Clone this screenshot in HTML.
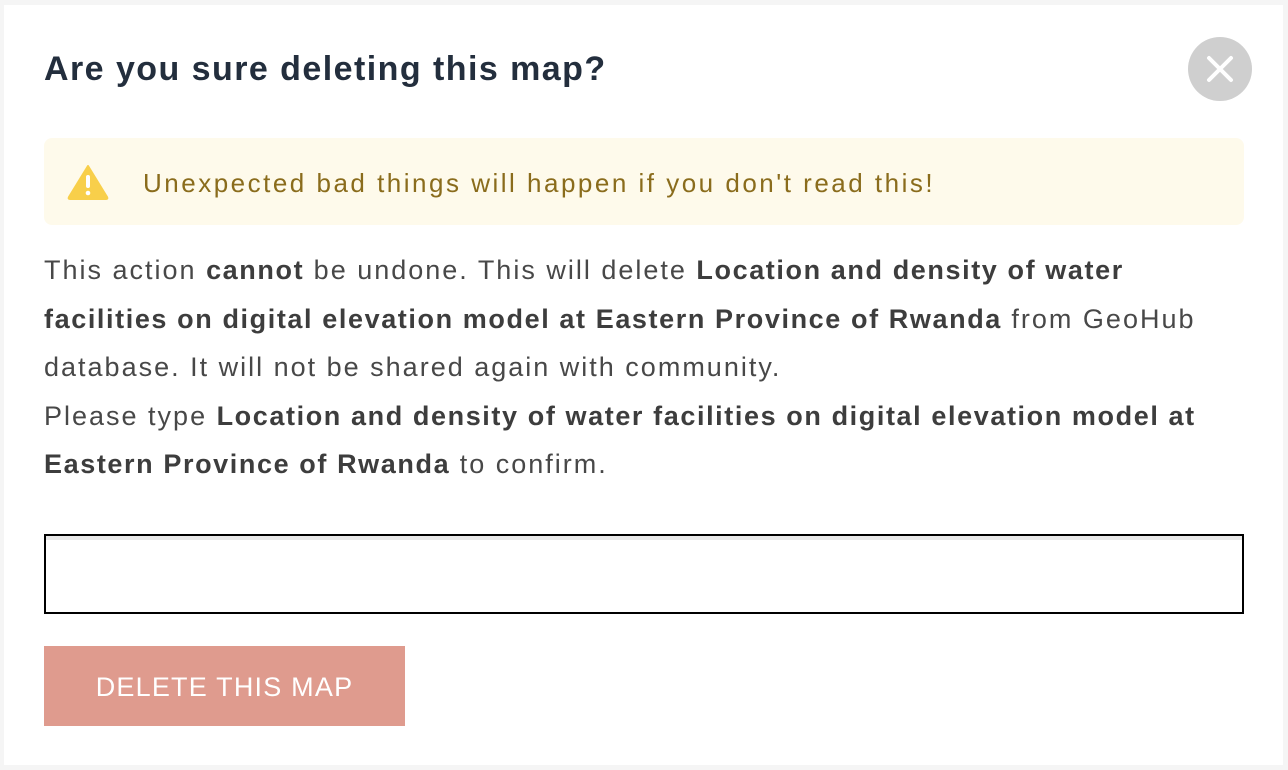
<!DOCTYPE html>
<html><head><meta charset="utf-8"><style>
html,body{margin:0;padding:0;width:1288px;height:770px;background:#f5f5f5;overflow:hidden;font-family:"Liberation Sans",sans-serif;}
.modal{position:absolute;left:4px;top:5px;width:1279px;height:760px;background:#fff;}
h1{position:absolute;left:40px;top:44px;margin:0;font-size:34px;font-weight:600;color:#232e3d;line-height:40px;letter-spacing:1.45px;white-space:nowrap}
.close{position:absolute;left:1184px;top:32px;width:64px;height:64px;border-radius:50%;background:#cfcfcf;}
.warn{position:absolute;left:40px;top:133px;width:1200px;height:87px;background:#fefaeb;border-radius:8px;}
.warn span{position:absolute;left:99px;top:30px;font-size:26px;color:#8a6c1c;line-height:30px;white-space:nowrap;letter-spacing:2.5px}
.body{position:absolute;left:40px;top:241px;font-size:27px;line-height:48.5px;color:#484848;white-space:nowrap;letter-spacing:2px}
.body b{color:#3d3d3d;letter-spacing:1.6px}
.input{position:absolute;left:40px;top:529px;width:1196px;height:76px;border:2px solid #000;}
.input:before{content:"";position:absolute;left:0;right:0;top:0;height:4px;background:#e8e8e8}
.btn{position:absolute;left:40px;top:641px;width:361px;height:80px;background:#df9b8e;color:#fff;font-size:27px;line-height:82px;text-align:center;letter-spacing:1.2px}
</style></head><body>
<div class="modal">
<h1>Are you sure deleting this map?</h1>
<div class="close"><svg width="64" height="64" viewBox="0 0 64 64"><path d="M21 21L43 43M43 21L21 43" stroke="#fff" stroke-width="4" stroke-linecap="round"/></svg></div>
<div class="warn"><svg style="position:absolute;left:23px;top:26px" width="42" height="36" viewBox="0 0 42 36"><path d="M21 2 L40 33 Q41 35 39 35 L3 35 Q1 35 2 33 Z" fill="#f8cf4a" stroke="#f8cf4a" stroke-width="2" stroke-linejoin="round"/><rect x="19" y="11" width="4" height="13" rx="2" fill="#fff"/><circle cx="21" cy="29" r="2.3" fill="#fff"/></svg><span>Unexpected bad things will happen if you don't read this!</span></div>
<div class="body">This action <b>cannot</b> be undone. This will delete <b>Location and density of water</b><br><b>facilities on digital elevation model at Eastern Province of Rwanda</b> from GeoHub<br>database. It will not be shared again with community.<br>Please type <b>Location and density of water facilities on digital elevation model at</b><br><b>Eastern Province of Rwanda</b> to confirm.</div>
<div class="input"></div>
<div class="btn">DELETE THIS MAP</div>
</div>
</body></html>
